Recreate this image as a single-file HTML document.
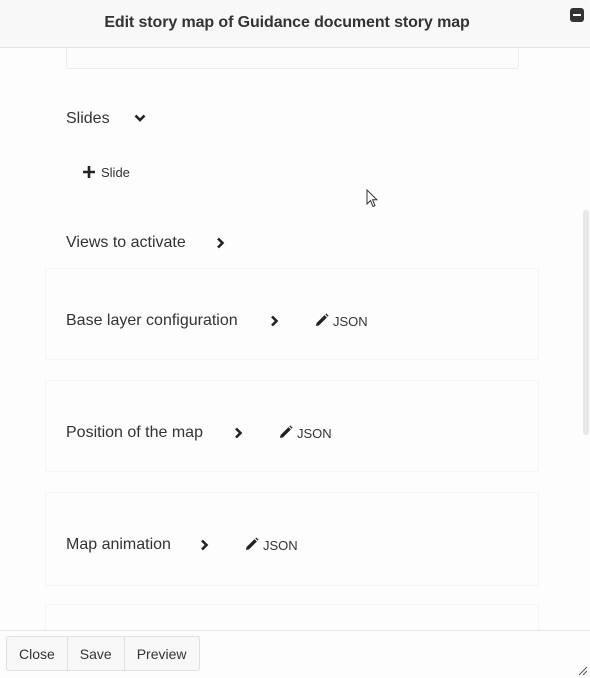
<!DOCTYPE html>
<html><head><meta charset="utf-8"><style>
*{box-sizing:border-box;margin:0;padding:0}
body{width:590px;height:678px;background:#fdfdfd;font-family:"Liberation Sans",sans-serif;color:#333;position:relative;overflow:hidden}
.hdr{position:absolute;left:0;top:0;width:590px;height:48px;background:#f8f8f8;border-bottom:1px solid #e6e6e6;border-radius:4px 4px 0 0;padding-right:16px}
.hdr h1{font-size:16px;font-weight:bold;text-align:center;line-height:46px;color:#333;letter-spacing:-0.1px}
.min{position:absolute;right:6px;top:8px;width:14px;height:14px;background:#333;border-radius:3px}
.min:after{content:"";position:absolute;left:3px;top:6px;width:8px;height:2px;background:#fff}
.topbox{position:absolute;left:66px;top:40px;width:453px;height:29px;border:1px solid #ececec;border-top:none;border-radius:0 0 3px 3px;background:#fcfcfc}
.panel{position:absolute;left:45px;width:494px;border:1px solid #f5f5f5;background:#fdfdfd}
.lbl{position:absolute;font-size:16px;color:#333}
.chev{position:absolute}
.json{position:absolute;font-size:13px;color:#333}
.scroll{position:absolute;left:583px;top:210px;width:6px;height:225px;background:#e8e8e8;border-radius:3px}
.foot{position:absolute;left:0;top:630px;width:590px;height:48px;border-top:1px solid #e6e6e6;background:#fdfdfd}
.btns{position:absolute;left:6px;top:636px;height:35px;display:flex;border:1px solid #e0e0e0;border-radius:3px;background:#f8f8f8}
.btns div{font-size:14px;line-height:34px;padding:0 12px;border-right:1px solid #e0e0e0}
.btns div:last-child{border-right:none}
</style></head><body>
<div class="topbox"></div>
<div class="panel" style="top:268px;height:92px"></div>
<div class="panel" style="top:380px;height:92px"></div>
<div class="panel" style="top:492px;height:94px"></div>
<div class="panel" style="top:604px;height:30px"></div>
<div class="hdr"><h1>Edit story map of Guidance document story map</h1><div class="min"></div></div>

<div class="lbl" style="left:66px;top:110px">Slides</div>
<svg class="chev" style="left:134px;top:114px" width="12" height="9" viewBox="0 0 12 9"><path d="M1.5 1.5L6 6L10.5 1.5" stroke="#222" stroke-width="2.6" fill="none"/></svg>

<svg style="position:absolute;left:83px;top:166px" width="12" height="12" viewBox="0 0 12 12"><path d="M6 0V12M0 6H12" stroke="#222" stroke-width="2.6"/></svg>
<div class="lbl" style="left:101px;top:165px;font-size:13px">Slide</div>

<svg style="position:absolute;left:366px;top:189px" width="12" height="19" viewBox="0 0 12 19"><path d="M1 1V15L4.5 11.5L7 17.5L9 16.6L6.6 10.8H11Z" fill="#fff" stroke="#333" stroke-width="1"/></svg>

<div class="lbl" style="left:66px;top:234px">Views to activate</div>
<svg class="chev" style="left:216px;top:237px" width="9" height="12" viewBox="0 0 9 12"><path d="M2 1.5L6.5 6L2 10.5" stroke="#222" stroke-width="2.6" fill="none"/></svg>

<div class="lbl" style="left:66px;top:312px">Base layer configuration</div>
<svg class="chev" style="left:270px;top:315px" width="9" height="12" viewBox="0 0 9 12"><path d="M2 1.5L6.5 6L2 10.5" stroke="#222" stroke-width="2.6" fill="none"/></svg>
<svg style="position:absolute;left:315px;top:313px" width="14" height="14" viewBox="0 0 14 14"><path d="M1 13L1.6 10L9.5 2.1L11.9 4.5L4 12.4Z M10.3 1.3L11.2 0.4L13.6 2.8L12.7 3.7Z" fill="#222"/></svg>
<div class="json" style="left:333px;top:314px">JSON</div>

<div class="lbl" style="left:66px;top:424px">Position of the map</div>
<svg class="chev" style="left:234px;top:427px" width="9" height="12" viewBox="0 0 9 12"><path d="M2 1.5L6.5 6L2 10.5" stroke="#222" stroke-width="2.6" fill="none"/></svg>
<svg style="position:absolute;left:279px;top:425px" width="14" height="14" viewBox="0 0 14 14"><path d="M1 13L1.6 10L9.5 2.1L11.9 4.5L4 12.4Z M10.3 1.3L11.2 0.4L13.6 2.8L12.7 3.7Z" fill="#222"/></svg>
<div class="json" style="left:297px;top:426px">JSON</div>

<div class="lbl" style="left:66px;top:536px">Map animation</div>
<svg class="chev" style="left:200px;top:539px" width="9" height="12" viewBox="0 0 9 12"><path d="M2 1.5L6.5 6L2 10.5" stroke="#222" stroke-width="2.6" fill="none"/></svg>
<svg style="position:absolute;left:245px;top:537px" width="14" height="14" viewBox="0 0 14 14"><path d="M1 13L1.6 10L9.5 2.1L11.9 4.5L4 12.4Z M10.3 1.3L11.2 0.4L13.6 2.8L12.7 3.7Z" fill="#222"/></svg>
<div class="json" style="left:263px;top:538px">JSON</div>

<div class="scroll"></div>
<div class="foot"></div>
<div class="btns"><div>Close</div><div>Save</div><div>Preview</div></div>
<svg style="position:absolute;left:578px;top:666px" width="10" height="10" viewBox="0 0 10 10"><path d="M1 9L9 1M5 9L9 5" stroke="#555" stroke-width="1"/></svg>
</body></html>
